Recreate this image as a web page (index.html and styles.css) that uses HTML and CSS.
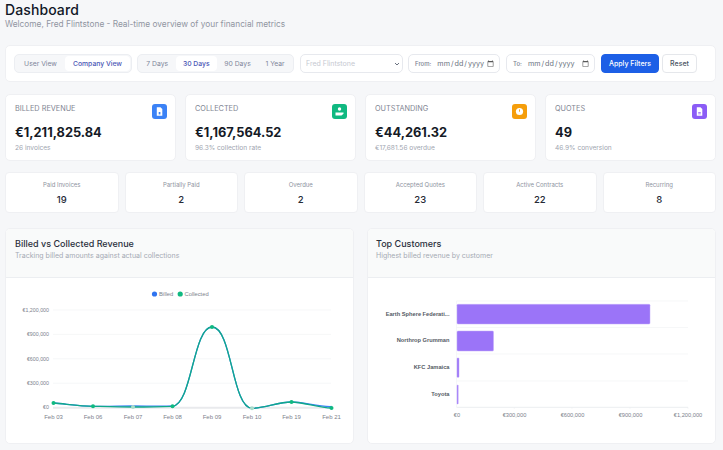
FILE: index.html
```html
<!DOCTYPE html>
<html lang="en">
<head>
<meta charset="utf-8">
<title>Dashboard</title>
<link rel="stylesheet" href="styles.css">
</head>
<body>
<header class="page-head">
  <h1>Dashboard</h1>
  <p>Welcome, Fred Flintstone - Real-time overview of your financial metrics</p>
</header>

<section class="filters">
  <div class="seg seg-view">
    <span class="seg-btn">User View</span>
    <span class="seg-btn active">Company View</span>
  </div>
  <div class="seg seg-range">
    <span class="seg-btn">7 Days</span>
    <span class="seg-btn active">30 Days</span>
    <span class="seg-btn">90 Days</span>
    <span class="seg-btn">1 Year</span>
  </div>
  <div class="select-wrap">
    <select class="user-select"><option>Fred Flintstone</option></select>
    <svg class="chevron" viewBox="0 0 6 4" width="6" height="4"><path d="M1 1l2 2 2-2"/></svg>
  </div>
  <label class="date date-from"><span>From:</span><input type="date"></label>
  <label class="date date-to"><span>To:</span><input type="date"></label>
  <button class="btn btn-primary">Apply Filters</button>
  <button class="btn btn-plain">Reset</button>
</section>

<section class="kpis">
  <article class="kpi">
    <div class="kpi-top"><span class="kpi-label">BILLED REVENUE</span>
      <span class="kpi-icon blue"><svg viewBox="0 0 15 15"><path fill="#fff" d="M4.800 3.200h3.700l1.800 1.800v6.800H4.800z"/><path fill="#3b82f6" d="M6.700 8h1.700v2.400H6.700z"/></svg></span></div>
    <div class="kpi-value">€1,211,825.84</div>
    <div class="kpi-sub">26 invoices</div>
  </article>
  <article class="kpi">
    <div class="kpi-top"><span class="kpi-label">COLLECTED</span>
      <span class="kpi-icon green"><svg viewBox="0 0 15 15"><circle cx="7.500" cy="5" r="1.700" fill="#fff"/><path fill="#fff" d="M3.500 8.600h8v1.100l-2 1.700h-6z"/></svg></span></div>
    <div class="kpi-value">€1,167,564.52</div>
    <div class="kpi-sub">96.3% collection rate</div>
  </article>
  <article class="kpi">
    <div class="kpi-top"><span class="kpi-label">OUTSTANDING</span>
      <span class="kpi-icon orange"><svg viewBox="0 0 15 15"><circle cx="7.500" cy="7.500" r="3.600" fill="#fff"/><path stroke="#f59e0b" stroke-width=".9" fill="none" d="M7.500 5.400v2.300"/></svg></span></div>
    <div class="kpi-value">€44,261.32</div>
    <div class="kpi-sub">€17,681.56 overdue</div>
  </article>
  <article class="kpi">
    <div class="kpi-top"><span class="kpi-label">QUOTES</span>
      <span class="kpi-icon purple"><svg viewBox="0 0 15 15"><path fill="#fff" d="M4.800 3.200h3.700l1.800 1.800v6.800H4.800z"/><path fill="#8b5cf6" d="M6.200 8h2.600v.8H6.200zM6.200 9.500h2.600v.7H6.200z"/></svg></span></div>
    <div class="kpi-value">49</div>
    <div class="kpi-sub">46.9% conversion</div>
  </article>
</section>

<section class="stats">
  <div class="stat"><span class="stat-label">Paid Invoices</span><span class="stat-value">19</span></div>
  <div class="stat"><span class="stat-label">Partially Paid</span><span class="stat-value">2</span></div>
  <div class="stat"><span class="stat-label">Overdue</span><span class="stat-value">2</span></div>
  <div class="stat"><span class="stat-label">Accepted Quotes</span><span class="stat-value">23</span></div>
  <div class="stat"><span class="stat-label">Active Contracts</span><span class="stat-value">22</span></div>
  <div class="stat"><span class="stat-label">Recurring</span><span class="stat-value">8</span></div>
</section>

<section class="charts">
  <article class="chart-card">
    <header class="chart-head">
      <h2>Billed vs Collected Revenue</h2>
      <p>Tracking billed amounts against actual collections</p>
    </header>
    <svg class="chart" viewBox="0 0 347 166" width="347" height="166">
      <g class="grid">
        <path d="M47 32H325M47 56.400H325M47 80.800H325M47 105.200H325"/>
        <path class="axis" d="M47 129.700H325"/>
      </g>
      <g class="legend">
        <circle cx="148.500" cy="16" r="2.600" fill="#2f74f0"/><text x="153" y="18.200">Billed</text>
        <circle cx="174.200" cy="16" r="2.600" fill="#10b981"/><text x="178.500" y="18.200">Collected</text>
      </g>
      <g class="ylabels">
        <text x="43" y="34">€1,200,000</text>
        <text x="43" y="58.400">€900,000</text>
        <text x="43" y="82.700">€600,000</text>
        <text x="43" y="107">€300,000</text>
        <text x="43" y="131.200">€0</text>
      </g>
      <path class="line-billed" d="M47.500 125C60 126 74 128 87 128.300S114 128 127 128S154 128.500 166.500 128C186 127 187 49 206 49C226 49 226 130.300 246 130.300C259 130.300 272 124 285.500 124C298 124 312 129 325.500 128.500"/>
      <path class="line-collected" d="M47.500 125C60 126 74 128 87 128.300S114 129 127 129S154 128.800 166.500 128.300C186 127 187 49 206 49C226 49 226 130.300 246 130.300C259 130.300 272 124 285.500 124C298 124 312 130 325.500 130"/>
      <g class="dots">
        <circle cx="47.500" cy="125" r="2"/><circle cx="87" cy="128.300" r="2"/><circle class="pale" cx="127" cy="129" r="2"/><circle cx="166.500" cy="128.300" r="2"/><circle cx="206" cy="49" r="2"/><circle class="pale" cx="246" cy="130.300" r="2"/><circle cx="285.500" cy="124" r="2"/><circle cx="325.500" cy="130" r="2"/>
      </g>
      <g class="xlabels">
        <text x="47.500" y="141">Feb 03</text><text x="87" y="141">Feb 06</text><text x="127" y="141">Feb 07</text><text x="166.500" y="141">Feb 08</text><text x="206" y="141">Feb 09</text><text x="246" y="141">Feb 10</text><text x="285.500" y="141">Feb 19</text><text x="325.500" y="141">Feb 21</text>
      </g>
    </svg>
  </article>
  <article class="chart-card">
    <header class="chart-head">
      <h2>Top Customers</h2>
      <p>Highest billed revenue by customer</p>
    </header>
    <svg class="chart" viewBox="0 0 347 166" width="347" height="166">
      <g class="grid">
        <path d="M88.500 23H320M88.500 49.500H320M88.500 76H320M88.500 103H320"/>
        <path d="M88.500 23V129M146.300 129V131M204 129V131M262 129V131M320 129V131"/>
        <path class="axis-b" d="M88.500 129.300H320"/>
      </g>
      <g class="bars">
        <rect x="89" y="26.300" width="193" height="19.700" rx="1"/>
        <rect x="89" y="53" width="36.500" height="20" rx="1"/>
        <rect x="89" y="80" width="2" height="19.300" rx=".5"/>
        <rect x="89" y="107" width="1.200" height="19" rx=".5"/>
      </g>
      <g class="cust">
        <text x="81.500" y="37.500">Earth Sphere Federati...</text>
        <text x="81.500" y="64">Northrop Grumman</text>
        <text x="81.500" y="91">KFC Jamaica</text>
        <text x="81.500" y="118">Toyota</text>
      </g>
      <g class="xlabels money">
        <text x="89" y="139">€0</text><text x="146.500" y="139">€300,000</text><text x="204.500" y="139">€600,000</text><text x="262.500" y="139">€900,000</text><text x="320" y="139">€1,200,000</text>
      </g>
    </svg>
  </article>
</section>
</body>
</html>
```
FILE: styles.css
```css
* { box-sizing: border-box; }
html, body { margin: 0; height: 100%; }
body {
  width: 723px;
  height: 450px;
  overflow: hidden;
  padding: 1px 7px 0 5px;
  background: #f6f7f9;
  font-family: "Inter", "Liberation Sans", sans-serif;
  color: #111827;
}
.page-head h1 {
  margin: 0;
  font-size: 14px;
  line-height: 17px;
  font-weight: 500;
  letter-spacing: 0.1px;
}
.page-head p {
  margin: 1px 0 0;
  font-size: 8.300px;
  line-height: 11px;
  color: #9095a1;
}
.filters {
  margin-top: 15px;
  height: 37px;
  display: flex;
  align-items: center;
  padding: 0 8px;
  background: #fff;
  border: 1px solid #eff0f3;
  border-radius: 5px;
}
.seg {
  display: flex;
  align-items: center;
  height: 19px;
  padding: 1px;
  background: #f6f7f9;
  border: 1px solid #eceef2;
  border-radius: 5px;
}
.seg-view { width: 118px; margin-right: 5px; }
.seg-range { width: 157px; margin-right: 6px; }
.seg-btn {
  flex: 1 1 auto;
  height: 100%;
  display: flex;
  align-items: center;
  justify-content: center;
  font-size: 6.800px;
  color: #80869a;
  border-radius: 4px;
  white-space: nowrap;
}
.seg-btn.active { background: #fff; color: #4a56b5; font-weight: 500; }
.seg-view .seg-btn:first-child { flex: 0 0 49px; }
.select-wrap {
  position: relative;
  width: 103px;
  height: 19px;
  margin-right: 5px;
}
.user-select {
  appearance: none;
  display: block;
  width: 100%;
  height: 100%;
  padding: 0 10px 0 5px;
  font: 7px "Inter", sans-serif;
  color: #c6c9d1;
  background: #fff;
  border: 1px solid #e7e9ee;
  border-radius: 5px;
}
.chevron {
  position: absolute;
  right: 3px;
  top: 8px;
  fill: none;
  stroke: #6b7280;
  stroke-width: 1;
}
.date {
  display: flex;
  align-items: center;
  height: 19px;
  padding: 0 3px 0 6px;
  background: #fff;
  border: 1px solid #e7e9ee;
  border-radius: 5px;
  font-size: 6px;
  font-weight: 500;
  color: #7b8190;
}
.date-from { width: 92px; margin-right: 6px; gap: 5px; }
.date-to { width: 89px; margin-right: 6px; gap: 5px; }
.date input {
  flex: 1;
  min-width: 0;
  height: 15px;
  padding: 0;
  border: 0;
  background: transparent;
  font: 7.200px "Inter", sans-serif;
  color: #6b7280;
}
.date input::-webkit-calendar-picker-indicator { opacity: .65; margin-left: 0; }
.btn {
  height: 19px;
  padding: 0;
  border-radius: 4px;
  font: 500 7px "Inter", sans-serif;
}
.btn-primary {
  width: 58px;
  margin-right: 3px;
  color: #fff;
  background: #1d5fe6;
  border: 1px solid #1d5fe6;
}
.btn-plain {
  width: 35px;
  color: #4b5563;
  background: #fff;
  border: 1px solid #e5e7eb;
}
.kpis {
  margin-top: 12px;
  display: grid;
  grid-template-columns: repeat(4, 1fr);
  gap: 9px;
}
.kpi {
  height: 67px;
  padding: 9px 8px 0 9px;
  background: #fff;
  border: 1px solid #eff0f3;
  border-radius: 5px;
}
.kpi-top {
  display: flex;
  justify-content: space-between;
  align-items: flex-start;
  height: 18px;
}
.kpi-label {
  margin-top: 1px;
  font-size: 7.300px;
  line-height: 8px;
  color: #7f8593;
}
.kpi-icon {
  width: 15px;
  height: 15px;
  border-radius: 3px;
}
.kpi-icon svg { display: block; width: 15px; height: 15px; }
.blue { background: #3b82f6; }
.green { background: #10b981; }
.orange { background: #f59e0b; }
.purple { background: #8b5cf6; }
.kpi-value {
  margin-top: 3px;
  font-size: 12.800px;
  line-height: 16px;
  font-weight: 700;
  color: #151a26;
}
.kpi-sub {
  margin-top: 2px;
  font-size: 6.600px;
  line-height: 10px;
  color: #a0a5b0;
}
.stats {
  margin-top: 11px;
  display: grid;
  grid-template-columns: repeat(6, 1fr);
  gap: 6px;
}
.stat {
  height: 41px;
  padding-top: 7px;
  display: flex;
  flex-direction: column;
  align-items: center;
  gap: 5px;
  background: #fff;
  border: 1px solid #eff0f3;
  border-radius: 4px;
}
.stat-label {
  font-size: 6px;
  line-height: 9px;
  color: #8e93a0;
}
.stat-value {
  font-size: 9.500px;
  line-height: 12px;
  font-weight: 500;
  color: #252a36;
}
.charts {
  margin-top: 15px;
  display: grid;
  grid-template-columns: 349px 349px;
  gap: 13px;
}
.chart-card {
  height: 216px;
  background: #fff;
  border: 1px solid #eff0f3;
  border-radius: 5px;
  overflow: hidden;
}
.chart-head {
  height: 49px;
  padding: 9px 8px 0 9px;
  background: #f9fafa;
  border-bottom: 1px solid #eceef1;
}
.chart-card:last-child .chart-head { padding-left: 8px; }
.chart-head h2 {
  margin: 0;
  font-size: 9px;
  line-height: 12px;
  font-weight: 500;
  color: #2b303c;
}
.chart-head p {
  margin: 0;
  font-size: 7px;
  line-height: 11px;
  color: #a5aab4;
}
.chart { display: block; }
.chart text { font-family: "Liberation Sans", sans-serif; font-size: 6px; fill: #7d828c; }
.grid path { stroke: #f2f3f5; stroke-width: .7; fill: none; }
.grid .axis { stroke: #e9eaed; stroke-width: 2; }
.grid .axis-b { stroke: #eceef1; stroke-width: 1; }
.chart .ylabels text { text-anchor: end; font-size: 5.300px; }
.xlabels text { text-anchor: middle; }
.chart .money text { font-size: 5.700px; }
.chart .cust text { text-anchor: end; font-weight: 700; font-size: 5.700px; fill: #555a64; }
.chart .legend text { font-size: 5.800px; }
.line-billed { fill: none; stroke: #3b82f6; stroke-width: 1.300; }
.line-collected { fill: none; stroke: #10a88a; stroke-width: 1.300; }
.dots circle { fill: #10b981; }
.dots .pale { fill: #a9dccb; }
.bars rect { fill: #9b74f8; stroke: #c3aafb; stroke-width: .5; }
```
